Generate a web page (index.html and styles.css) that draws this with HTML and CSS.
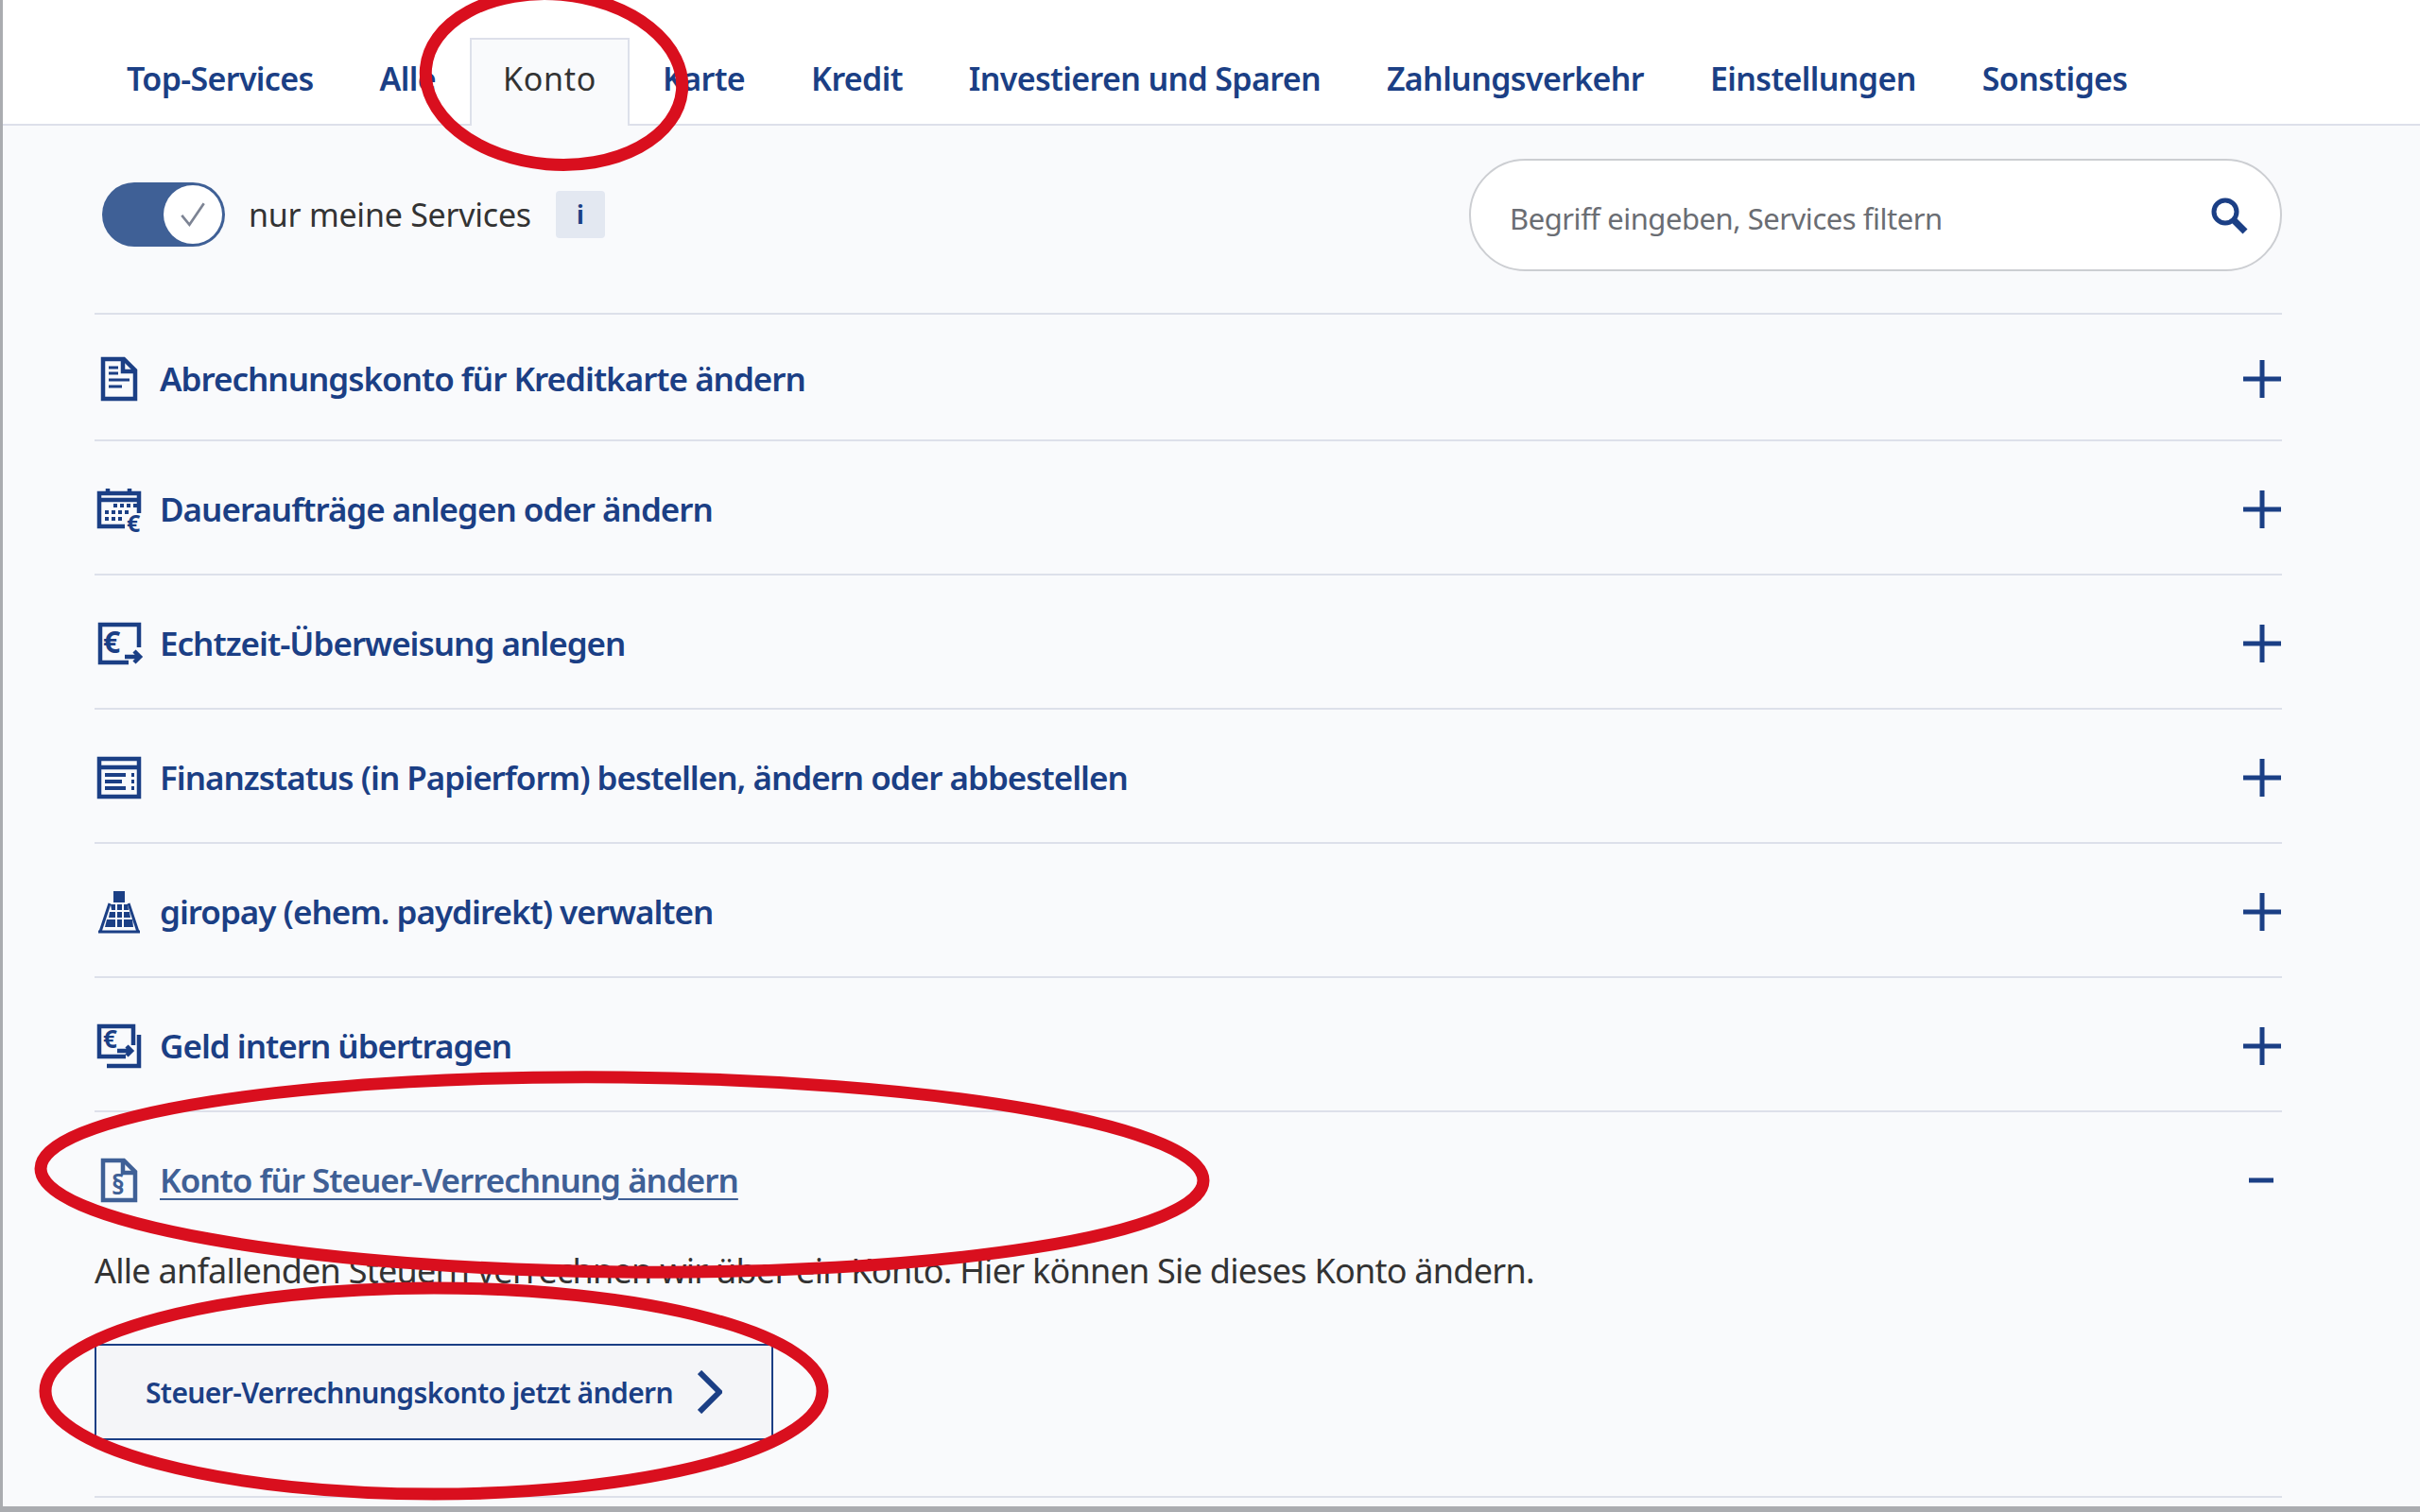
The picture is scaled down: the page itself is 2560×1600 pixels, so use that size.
FILE: index.html
```html
<!DOCTYPE html>
<html lang="de">
<head>
<meta charset="utf-8">
<title>Services</title>
<link rel="stylesheet" href="styles.css">
</head>
<body>
<div class="page">
  <nav class="tabs">
    <a class="tab">Top-Services</a>
    <a class="tab">Alle</a>
    <a class="tab tab-active">Konto</a>
    <a class="tab">Karte</a>
    <a class="tab">Kredit</a>
    <a class="tab">Investieren und Sparen</a>
    <a class="tab">Zahlungsverkehr</a>
    <a class="tab">Einstellungen</a>
    <a class="tab">Sonstiges</a>
  </nav>
  <main class="content">
    <div class="toolbar">
      <div class="toggle-group">
        <span class="toggle"><span class="knob"><svg viewBox="0 0 40 40" class="check"><path d="M7 21l9 11L33 7"/></svg></span></span>
        <span class="toggle-label">nur meine Services</span>
        <span class="info">i</span>
      </div>
      <div class="search">
        <span class="placeholder">Begriff eingeben, Services filtern</span>
        <svg class="search-icon" viewBox="0 0 40 40"><circle cx="16" cy="16" r="12"/><path d="M25 25l12 12" class="thick"/></svg>
      </div>
    </div>
    <div class="list">
      <div class="row row-first">
        <svg class="ico" viewBox="0 0 46 46"><path class="s" d="M6 2h22l12 12v30H6z"/><path class="s" d="M27 2v13h13"/><path class="t" d="M12 11h10M12 17h10M12 24h22M12 31h14"/></svg>
        <span class="label">Abrechnungskonto für Kreditkarte ändern</span>
        <svg class="plus" viewBox="0 0 40 40"><path d="M20 0v40M0 20h40"/></svg>
      </div>
      <div class="row">
        <svg class="ico" viewBox="0 0 46 46"><path class="s" d="M29 41H2V6h42v21M2 13h42"/><path class="s" d="M11 1v7M34 1v7"/><path class="d" d="M17 19h4M24 19h4M31 19h4M38 19h4M8 26h4M15 26h4M22 26h4M29 26h4M8 33h4M15 33h4M22 33h4"/><text class="g" x="31" y="47" font-size="25">€</text></svg>
        <span class="label">Daueraufträge anlegen oder ändern</span>
        <svg class="plus" viewBox="0 0 40 40"><path d="M20 0v40M0 20h40"/></svg>
      </div>
      <div class="row">
        <svg class="ico" viewBox="0 0 46 46"><path class="s" d="M44 27V3H3v40h30"/><text class="g" x="6" y="33" font-size="32">€</text><path class="s" d="M29 37h15M39 31l6 6-6 6"/></svg>
        <span class="label">Echtzeit-Überweisung anlegen</span>
        <svg class="plus" viewBox="0 0 40 40"><path d="M20 0v40M0 20h40"/></svg>
      </div>
      <div class="row">
        <svg class="ico" viewBox="0 0 46 46"><path class="s" d="M2 3h42v40H2z"/><path class="s" d="M2 12h42"/><path class="d" d="M8 20h22M8 27h18M8 34h22M36 20h3M36 27h3M36 34h3"/></svg>
        <span class="label">Finanzstatus (in Papierform) bestellen, ändern oder abbestellen</span>
        <svg class="plus" viewBox="0 0 40 40"><path d="M20 0v40M0 20h40"/></svg>
      </div>
      <div class="row">
        <svg class="ico" viewBox="0 0 46 46"><path class="f" d="M17 1h12v12H17zM14 15h5v6h-4zM21 15h5v6h-5zM28 15h4l1 6h-5zM13 23h6v6h-7zM21 23h5v6h-5zM28 23h6l1 6h-7zM10 31h9v8H8zM21 31h5v8h-5zM28 31h9l1 8H28z"/><path class="t" d="M1 44h44M3 44l10-30M43 44L33 14"/></svg>
        <span class="label">giropay (ehem. paydirekt) verwalten</span>
        <svg class="plus" viewBox="0 0 40 40"><path d="M20 0v40M0 20h40"/></svg>
      </div>
      <div class="row">
        <svg class="ico" viewBox="0 0 46 46"><path class="s" d="M38 22V2H2v32h28"/><path class="s" d="M44 11v33H10"/><text class="g" x="6" y="25" font-size="26">€</text><path class="s" d="M21 28h15M31 23l5 5-5 5"/></svg>
        <span class="label">Geld intern übertragen</span>
        <svg class="plus" viewBox="0 0 40 40"><path d="M20 0v40M0 20h40"/></svg>
      </div>
      <div class="row-open">
        <div class="row-head">
          <svg class="ico ico-light" viewBox="0 0 46 46"><path class="s" d="M6 2h22l12 12v30H6z"/><path class="s" d="M27 2v13h13"/><text class="g" x="15" y="38" font-size="28">§</text></svg>
          <span class="label label-link">Konto für Steuer-Verrechnung ändern</span>
          <svg class="minus" viewBox="0 0 26 6"><path d="M0 3h26"/></svg>
        </div>
        <p class="desc">Alle anfallenden Steuern verrechnen wir über ein Konto. Hier können Sie dieses Konto ändern.</p>
        <a class="btn">Steuer-Verrechnungskonto jetzt ändern<svg class="chev" viewBox="0 0 26 46"><path d="M2 2l21 21L2 44"/></svg></a>
      </div>
    </div>
  </main>
  <svg class="marks" viewBox="0 0 2560 1600">
    <ellipse cx="586" cy="84" rx="136" ry="90" transform="rotate(5 586 84)"/>
    <ellipse cx="658" cy="1243" rx="615" ry="103" transform="rotate(0.6 658 1243)"/>
    <ellipse cx="459" cy="1472" rx="411" ry="109"/>
  </svg>
</div>
</body>
</html>
```

FILE: styles.css
```css
* { box-sizing: border-box; }
html, body { margin: 0; padding: 0; }
body { font-family: "Noto Sans", "Open Sans", sans-serif; background: #aaacb0; }
.page {
  position: relative;
  width: 2560px;
  height: 1600px;
  padding: 0 0 6px 3px;
  overflow: hidden;
  display: flex;
  flex-direction: column;
}
.tabs {
  display: flex;
  align-items: flex-end;
  height: 133px;
  flex: none;
  padding-left: 96px;
  background: #fff;
  border-bottom: 2px solid #dde0ea;
}
.tab {
  height: 93px;
  margin-bottom: -2px;
  padding: 0 33px 9px;
  display: flex;
  align-items: center;
  border: 2px solid transparent;
  border-bottom: 0;
  font-size: 34px;
  font-weight: 600;
  letter-spacing: -0.65px;
  color: #1b3f85;
  white-space: nowrap;
}
.tab-active {
  margin-left: 1px;
  background: #f9fafc;
  border-color: #dde0ea;
  font-weight: 400;
  letter-spacing: 0.7px;
  color: #333;
}
.content {
  flex: 1;
  display: flex;
  flex-direction: column;
  padding: 0 146px 0 97px;
  background: #f9fafc;
}
.toolbar {
  display: flex;
  justify-content: space-between;
  align-items: flex-start;
  height: 198px;
  padding-top: 35px;
}
.toggle-group {
  display: flex;
  align-items: center;
  margin: 25px 0 0 8px;
  height: 68px;
}
.toggle {
  width: 130px;
  height: 68px;
  border-radius: 34px;
  background: #3f6096;
  display: flex;
  justify-content: flex-end;
  padding: 3px;
}
.knob {
  width: 62px;
  height: 62px;
  border-radius: 50%;
  background: #fff;
  display: flex;
  align-items: center;
  justify-content: center;
}
.check { width: 36px; height: 36px; fill: none; stroke: #7d8494; stroke-width: 3; }
.toggle-label {
  margin-left: 25px;
  font-size: 34px;
  letter-spacing: -0.25px;
  color: #333;
}
.info {
  margin-left: 26px;
  width: 52px;
  height: 50px;
  border-radius: 4px;
  background: #e3e8f1;
  display: flex;
  align-items: center;
  justify-content: center;
  font-size: 26px;
  font-weight: 700;
  color: #1b3f85;
}
.search {
  width: 860px;
  height: 119px;
  border: 2px solid #ccced2;
  border-radius: 60px;
  background: #fff;
  display: flex;
  align-items: center;
  justify-content: space-between;
  padding: 0 34px 0 41px;
}
.placeholder { font-size: 31px; letter-spacing: -0.47px; color: #6a6d73; margin-top: 6px; }
.search-icon { width: 40px; height: 40px; fill: none; stroke: #1b3f85; stroke-width: 5; }
.search-icon .thick { stroke-width: 7; }
.list {
  display: flex;
  flex-direction: column;
  border-top: 2px solid #dde0ea;
}
.row {
  height: 142px;
  display: flex;
  align-items: center;
  border-bottom: 2px solid #dde0ea;
  padding-top: 3px;
}
.row-first { height: 134px; }
.ico {
  width: 46px;
  height: 46px;
  margin: 0 20px 0 3px;
  flex: none;
  color: #1b3f85;
  overflow: visible;
}
.ico .s, .ico .t, .ico .d { fill: none; stroke: currentColor; }
.ico .s { stroke-width: 4.5; }
.ico .t { stroke-width: 3; }
.ico .d { stroke-width: 4; }
.ico .f { fill: currentColor; }
.ico .g { fill: currentColor; font-weight: 700; }
.ico-light { color: #3f6096; }
.label {
  flex: 1;
  font-size: 35px;
  font-weight: 600;
  letter-spacing: -1px;
  color: #1b3f85;
  white-space: nowrap;
}
.plus { width: 40px; height: 40px; margin-right: 1px; flex: none; fill: none; stroke: #1b3f85; stroke-width: 5; }
.row-open { border-bottom: 2px solid #dde0ea; height: 408px; flex: none; }
.row-head {
  height: 143px;
  display: flex;
  align-items: center;
}
.label-link {
  flex: none;
  color: #3f6096;
  text-decoration: underline;
  text-underline-offset: 6px;
  text-decoration-thickness: 2px;
  margin-right: auto;
}
.minus { width: 26px; height: 6px; margin-right: 9px; flex: none; fill: none; stroke: #1b3f85; stroke-width: 5; }
.desc {
  margin: 0;
  height: 50px;
  line-height: 50px;
  font-size: 36px;
  letter-spacing: -0.75px;
  color: #333;
  white-space: nowrap;
}
.btn {
  margin-top: 52px;
  width: 718px;
  height: 102px;
  display: flex;
  align-items: center;
  padding-left: 52px;
  gap: 26px;
  background: #f4f5f8;
  border: 2px solid #1b3f85;
  font-size: 30px;
  font-weight: 600;
  letter-spacing: -0.63px;
  color: #1b3f85;
  white-space: nowrap;
}
.chev { width: 26px; height: 46px; fill: none; stroke: #1b3f85; stroke-width: 6; }
.marks {
  position: absolute;
  left: 0;
  top: 0;
  width: 2560px;
  height: 1600px;
  pointer-events: none;
  fill: none;
  stroke: #d90f1e;
  stroke-width: 13;
}
```
